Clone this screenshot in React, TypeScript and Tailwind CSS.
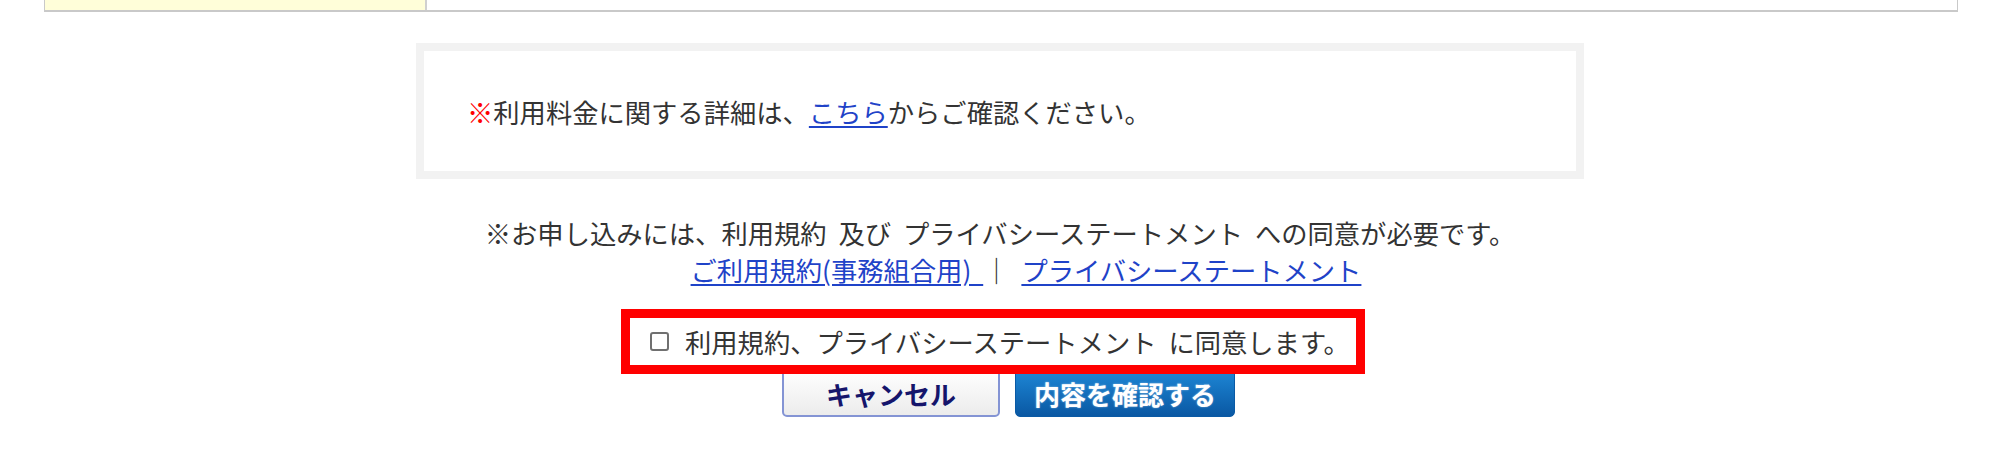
import React from 'react';

const jp = { fontFamily: '"Noto Sans CJK JP", "Noto Sans", sans-serif' };

export default function App() {
  return (
    <div className="w-[2000px] h-[466px] bg-white text-[#333] overflow-hidden" style={jp}>
      {/* bottom edge of the form table above */}
      <div className="ml-[44px] w-[1914px] h-[12px] flex border-x border-b-2 border-[#c9c9c9]">
        <div className="w-[382px] bg-[#fffed9] border-r-2 border-[#d0d0d0]" />
        <div className="flex-1 bg-white" />
      </div>

      <div className="flex flex-col items-center text-[26.3px] [word-spacing:6px]">
        <div className="mt-[31px] w-[1168px] h-[136px] border-8 border-[#f2f2f2] flex items-center pl-[43px]">
          <p className="leading-[37px] whitespace-nowrap">
            <span className="text-[#ff0000]">※</span>利用料金に関する詳細は、
            <a href="#" className="text-[#1f43c8] underline underline-offset-[3px]">こちら</a>
            からご確認ください。
          </p>
        </div>

        <p className="mt-[35px] leading-[37px] whitespace-nowrap">
          ※お申し込みには、利用規約 及び プライバシーステートメント への同意が必要です。
        </p>
        <p className="pl-[52px] leading-[37px] whitespace-nowrap">
          <a href="#" className="text-[#1f43c8] underline underline-offset-[3px]">ご利用規約(事務組合用) </a>
          ｜ <a href="#" className="text-[#1f43c8] underline underline-offset-[3px]">プライバシーステートメント</a>
        </p>

        <label className="relative z-10 mt-[21px] mr-[14px] w-[744px] h-[65px] border-[9px] border-[#ff0000] flex items-center pl-[20px] whitespace-nowrap">
          <input
            type="checkbox"
            className="appearance-none w-[19px] h-[19px] border-2 border-[#707070] rounded-[3px] bg-white shrink-0"
          />
          <span className="ml-[16px]">利用規約、プライバシーステートメント に同意します。</span>
        </label>

        <div className="-mt-[7px] pl-[17px] flex gap-[15px] [word-spacing:0px]">
          <button className="w-[218px] h-[50px] rounded-[5px] border-2 border-[#8494d4] bg-gradient-to-b from-white to-[#ececec] text-[#15156b] text-[26px] font-bold leading-none pt-[4px]">
            キャンセル
          </button>
          <button className="w-[220px] h-[50px] rounded-[5px] border border-[#0a5aa5] bg-gradient-to-b from-[#1f8ad9] to-[#0a58a3] text-white text-[26px] font-bold leading-none pt-[4px] [text-shadow:0_0_2px_rgba(255,255,255,0.5)]">
            内容を確認する
          </button>
        </div>
      </div>
    </div>
  );
}
